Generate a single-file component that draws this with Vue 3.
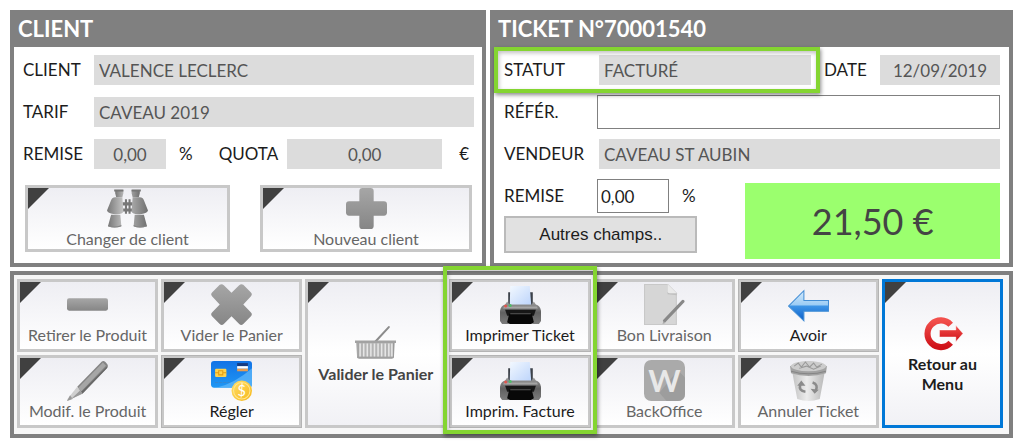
<template>
  <main class="till">
    <!-- Shared icon shapes -->
    <svg class="sprite" aria-hidden="true">
      <defs>
        <linearGradient id="grey" x1="0" y1="0" x2="0" y2="1">
          <stop offset="0" stop-color="#a6a6a6" />
          <stop offset="1" stop-color="#868686" />
        </linearGradient>
        <linearGradient id="metal" x1="0" y1="0" x2="1" y2="0">
          <stop offset="0" stop-color="#777" />
          <stop offset="0.4" stop-color="#c4c4c4" />
          <stop offset="1" stop-color="#707070" />
        </linearGradient>
        <linearGradient id="pale" x1="0" y1="0" x2="1" y2="0">
          <stop offset="0" stop-color="#c2c2c2" />
          <stop offset="0.45" stop-color="#ececec" />
          <stop offset="1" stop-color="#b8b8b8" />
        </linearGradient>
        <linearGradient id="card" x1="0" y1="0" x2="0" y2="1">
          <stop offset="0" stop-color="#1273e6" />
          <stop offset="1" stop-color="#1f97f4" />
        </linearGradient>
        <linearGradient id="coin" x1="0" y1="0" x2="1" y2="1">
          <stop offset="0" stop-color="#ffdf6b" />
          <stop offset="1" stop-color="#f7b718" />
        </linearGradient>
        <linearGradient id="sheet" x1="0" y1="0" x2="1" y2="1">
          <stop offset="0" stop-color="#f2f8ff" />
          <stop offset="1" stop-color="#bcd4fb" />
        </linearGradient>
        <linearGradient id="printer" x1="0" y1="0" x2="0" y2="1">
          <stop offset="0" stop-color="#a0a0a0" />
          <stop offset="0.5" stop-color="#606060" />
          <stop offset="1" stop-color="#7c7c7c" />
        </linearGradient>
        <linearGradient id="blue" x1="0" y1="0" x2="0" y2="1">
          <stop offset="0" stop-color="#d6ebfb" />
          <stop offset="0.46" stop-color="#9dcdf5" />
          <stop offset="0.52" stop-color="#3d94e6" />
          <stop offset="1" stop-color="#0a5cc8" />
        </linearGradient>
        <linearGradient id="red" x1="0" y1="0" x2="0" y2="1">
          <stop offset="0" stop-color="#f2504c" />
          <stop offset="1" stop-color="#cf1219" />
        </linearGradient>
      </defs>

      <symbol id="icon-binoculars" viewBox="0 0 40 40">
        <path d="M15 14h10v3H15zM15 20h10v3H15zM17.500 11h2v14h-2zM21 11h2v14h-2z" fill="#777" />
        <path d="M8 2h8v3l-1 4H9L8 5zM24 2h8v3l-1 4h-6l-1-4z" fill="url(#metal)" />
        <path d="M7 1.500h9v2H7zM24 1.500h9v2h-9z" fill="#777" />
        <path d="M8 9h7l1 14q-1 3-8 2.500Q1 25 0 22L4 12q1-3 4-3zM32 9h-7l-1 14q1 3 8 2.500 7-.5 8-3.500L36 12q-1-3-4-3z" fill="url(#metal)" />
        <path d="M4 26h9l1 11q-6 3-13 0zM27 26h9l3 11q-7 3-13 0z" fill="url(#metal)" />
        <path d="M1 36q6 3 13 0v1.500q-7 2-13 0zM26 36q6 3 13 0v1.500q-7 2-13 0z" fill="#858585" />
      </symbol>

      <symbol id="icon-plus" viewBox="0 0 40 40">
        <path d="M16 0h8q3 0 3 3v10h10q3 0 3 3v8q0 3-3 3H27v10q0 3-3 3h-8q-3 0-3-3V27H3q-3 0-3-3v-8q0-3 3-3h10V3q0-3 3-3z" fill="url(#grey)" />
      </symbol>

      <symbol id="icon-minus" viewBox="0 0 40 40">
        <rect x="0" y="14" width="40" height="12" rx="2" fill="url(#grey)" />
      </symbol>

      <symbol id="icon-cross" viewBox="0 0 40 40">
        <path d="M8.500.800q2-1.500 4 .4L20 8.500l7.500-7.300q2-1.900 4-.4l7.500 7.400q1.800 2-.2 4L31.500 20l7.300 7.500q2 2 .2 4l-7.500 7.500q-2 1.800-4 0L20 31.500 12.500 39q-2 1.800-4 0L1 31.500q-1.800-2 .2-4L8.500 20 1.200 12.200q-2-2-.2-4z" fill="url(#grey)" />
      </symbol>

      <symbol id="icon-pencil" viewBox="0 0 40 40">
        <path d="M10 26 34 1.500q1.500-1.500 3.500.5l2 2.500q1 2-.5 3.500L15 33z" fill="#858585" />
        <path d="M11 27 35 2.500l3 3L14 30.500z" fill="#a6a6a6" />
        <path d="m13.500 31.500 25-25 .8 1L15 33z" fill="#696969" />
        <path d="m10 26 5 7L1.500 39.500 0 40l.5-2z" fill="#cfcfcf" />
        <path d="M3 34.500 5.500 38 0 40zM10 26l2.500 4L4 38 15 33z" fill="#999" />
      </symbol>

      <symbol id="icon-card" viewBox="0 0 40 40">
        <rect x="0" y="1" width="40" height="26" rx="3" fill="url(#card)" />
        <path d="M40 8v16q0 3-3 3H5q18-4 35-19z" fill="#65bbfb" opacity="0.700" />
        <rect x="4" y="8.500" width="11" height="8" rx="1" fill="#ffd34d" />
        <path d="M4 12.500h3.500M11.500 12.500H15M7.500 10.500h4v4h-4z" fill="none" stroke="#e39d13" />
        <path d="M25.500 3H36v3H25.500z" fill="#163b80" />
        <path d="M25.500 6H36v2.500H25.500z" fill="#fff" />
        <path d="M25.500 8.500H36V11H25.500z" fill="#e79b4e" />
        <path d="M4 22h14" stroke="#3786ce" stroke-dasharray="3 1" />
        <circle cx="30" cy="30" r="10" fill="url(#coin)" />
        <circle cx="30" cy="30" r="8" fill="none" stroke="#ffe68f" />
      </symbol>

      <symbol id="icon-basket" viewBox="0 0 40 40">
        <path d="M20 18 33 4" stroke="#8c8c8c" stroke-width="2" stroke-linecap="round" />
        <path d="M1 18h38l-1 15q0 2-2 2H4q-2 0-2-2z" fill="#b4b4b4" />
        <path d="M5 20v13M8.500 20v13M12 20v13M15.500 20v13M19 20v13M22.500 20v13M26 20v13M29.500 20v13M33 20v13M36 20v13" stroke="#e6e6e6" stroke-width="1.500" />
        <path d="M2 33.500h36M3 19v15M37.500 19v15" stroke="#999" />
        <path d="M0 17h40v2.500H0z" fill="#a2a2a2" />
      </symbol>

      <symbol id="icon-printer" viewBox="0 0 40 40">
        <path d="M8 8h3v14H8zM29 8h3v14h-3z" fill="#3c4149" />
        <path d="M10 2h19l1.500 19h-21z" fill="url(#sheet)" />
        <path d="M7 17 9 20h22l2-3 2 3q4 1 5 6v10l-2 3h-6l-1-5H9l-1 5H2l-2-3V26q1-5 5-6z" fill="url(#printer)" />
        <path d="M4 22h32l1 2H3z" fill="#a5a5a5" />
        <path d="M5 25h30l-2 6H7z" fill="#171717" />
        <path d="M9 29h22l2 8q-1 2-3 2H10q-2 0-3-2z" fill="#080808" />
        <path d="M10 29h20" stroke="#555" />
        <circle cx="5.500" cy="21.500" r="1.500" fill="#e0564e" />
        <circle cx="10" cy="21" r="1.500" fill="#4fbc68" />
      </symbol>

      <symbol id="icon-note" viewBox="0 0 40 40">
        <path d="M0 0h23l9 9v31H0z" fill="#d6d6d6" />
        <path d="M.5.500H23L31.500 9v30.500H.5z" fill="none" stroke="#c8c8c8" />
        <path d="m23 0 9 9v2l-9-1z" fill="#c0c0c0" />
        <path d="M23 0v7q0 2 2 2h7z" fill="#eaeaea" />
        <path d="m20 36 18-19" stroke="#888" stroke-width="3" stroke-linecap="round" />
        <path d="m18 39 1-3 2 2z" fill="#aaa" />
      </symbol>

      <symbol id="icon-office" viewBox="0 0 40 40">
        <rect width="40" height="40" rx="7" fill="#aaa" />
        <path d="m15 32 18-22 7 7v16q0 7-7 7H22z" fill="#9d9d9d" />
      </symbol>

      <symbol id="icon-arrow" viewBox="0 0 40 40">
        <path d="M.5 21.500 15.500 6.500v9.500h24v10.500h-24V36z" fill="url(#blue)" stroke="#438ed5" />
      </symbol>

      <symbol id="icon-bin" viewBox="0 0 40 40">
        <path d="m4 11 5 27q11 4 22 0l5-27z" fill="url(#pale)" />
        <path d="M2 6q18-9 36 0l-1 7q-17 5-34 0z" fill="#a2a2a2" />
        <ellipse cx="20" cy="6" rx="17" ry="5" fill="#ccc" />
        <path d="m6 6 4-3 3 4 4-5 4 5 4-4 3 4 5-3M11 8l7-2 7 3 7-3" fill="none" stroke="#999" />
        <path d="M3 11q17 5 34 0" fill="none" stroke="#858585" />
        <path d="M17 31q-7-1-5-7M24 22q6 2 3 8" fill="none" stroke="#8b8b8b" stroke-width="2.500" />
        <path d="m9 25 4-5 4 5zM30 29l-4 4-4-5z" fill="#8b8b8b" />
      </symbol>

      <symbol id="icon-exit" viewBox="0 0 40 40">
        <path d="M28 11.500A13 13 0 1 0 28 29" fill="none" stroke="url(#red)" stroke-width="6" />
        <path d="M17 16.500h16v-4.500l7 8-7 8v-4.500H17z" fill="url(#red)" stroke="#fff" stroke-width="0.500" />
      </symbol>
    </svg>

    <div class="panels">
      <section class="panel">
        <h2 class="panel__title">CLIENT</h2>
        <div class="panel__body client">
          <div class="row">
            <label class="label" for="client">CLIENT</label>
            <input id="client" class="field" value="VALENCE LECLERC" readonly />
          </div>
          <div class="row">
            <label class="label" for="tarif">TARIF</label>
            <input id="tarif" class="field" value="CAVEAU 2019" readonly />
          </div>
          <div class="row">
            <label class="label" for="remise-client">REMISE</label>
            <input id="remise-client" class="field field--centered field--rate" value="0,00" readonly />
            <span class="percent">%</span>
            <label class="quota" for="quota">QUOTA</label>
            <input id="quota" class="field field--centered" value="0,00" readonly />
            <span class="euro">€</span>
          </div>
          <div class="client__actions">
            <button v-for="action in clientActions" :key="action.icon" class="tile tile--low" disabled>
              <svg class="tile__icon" viewBox="0 0 40 40"><use :href="`#icon-${action.icon}`" /></svg>
              <span class="tile__label">{{ action.label }}</span>
            </button>
          </div>
        </div>
      </section>

      <section class="panel">
        <h2 class="panel__title">TICKET N°70001540</h2>
        <div class="panel__body ticket">
          <div class="row">
            <div class="status">
              <label class="label" for="statut">STATUT</label>
              <input id="statut" class="field" value="FACTURÉ" readonly />
            </div>
            <label class="date-label" for="date">DATE</label>
            <input id="date" class="field field--centered field--date" value="12/09/2019" readonly />
          </div>
          <div class="row">
            <label class="label" for="refer">RÉFÉR.</label>
            <input id="refer" v-model="reference" class="field field--editable" />
          </div>
          <div class="row">
            <label class="label" for="vendeur">VENDEUR</label>
            <input id="vendeur" class="field" value="CAVEAU ST AUBIN" readonly />
          </div>
          <div class="ticket__bottom">
            <div class="ticket__extra">
              <div class="row">
                <label class="label" for="remise">REMISE</label>
                <input id="remise" v-model="discount" class="field field--editable field--rate" />
                <span class="percent">%</span>
              </div>
              <button class="more">Autres champs..</button>
            </div>
            <output class="total">21,50 €</output>
          </div>
        </div>
      </section>
    </div>

    <section class="actions">
      <div
        v-for="(column, index) in actionColumns"
        :key="index"
        class="actions__column"
        :class="{ 'actions__column--highlighted': column[0].icon === 'printer' }"
      >
        <button
          v-for="action in column"
          :key="action.label"
          class="tile"
          :class="{ 'tile--tall': column.length === 1, 'tile--exit': action.icon === 'exit' }"
          :disabled="action.disabled"
        >
          <svg class="tile__icon" viewBox="0 0 40 40">
            <use :href="`#icon-${action.icon}`" />
            <text v-if="action.icon === 'card'" class="coin-sign" x="30" y="35">$</text>
            <text v-if="action.icon === 'office'" class="office-sign" x="20" y="31">W</text>
          </svg>
          <span class="tile__label">{{ action.label }}</span>
        </button>
      </div>
    </section>
  </main>
</template>

<script setup>
import { ref } from 'vue'

const reference = ref('')
const discount = ref('0,00')

const clientActions = [
  { icon: 'binoculars', label: 'Changer de client' },
  { icon: 'plus', label: 'Nouveau client' }
]

// A column with a single action is drawn as one tall button
const actionColumns = [
  [
    { icon: 'minus', label: 'Retirer le Produit', disabled: true },
    { icon: 'pencil', label: 'Modif. le Produit', disabled: true }
  ],
  [
    { icon: 'cross', label: 'Vider le Panier', disabled: true },
    { icon: 'card', label: 'Régler' }
  ],
  [{ icon: 'basket', label: 'Valider le Panier', disabled: true }],
  [
    { icon: 'printer', label: 'Imprimer Ticket' },
    { icon: 'printer', label: 'Imprim. Facture' }
  ],
  [
    { icon: 'note', label: 'Bon Livraison', disabled: true },
    { icon: 'office', label: 'BackOffice', disabled: true }
  ],
  [
    { icon: 'arrow', label: 'Avoir' },
    { icon: 'bin', label: 'Annuler Ticket', disabled: true }
  ],
  [{ icon: 'exit', label: 'Retour au Menu' }]
]
</script>

<style>
body {
  margin: 0;
  background: #fff;
}
</style>

<style scoped>
.till {
  padding: 10px 11px 9px 10px;
  font-family: Lato, "Liberation Sans", sans-serif;
  font-size: 17px;
  line-height: 20px;
  color: #1c1c1c;
}

.till * {
  box-sizing: border-box;
}

.sprite {
  position: absolute;
  width: 0;
  height: 0;
}

.panels {
  display: grid;
  grid-template-columns: 476fr 523fr;
  gap: 4px;
  margin-bottom: 4px;
}

.panel {
  display: flex;
  flex-direction: column;
  min-width: 0;
  border: 4px solid #808080;
  border-top: none;
  background: #fff;
}

.panel__title {
  margin: 0;
  padding: 4px;
  background: #808080;
  color: #fff;
  font-size: 22px;
  line-height: 29px;
  font-weight: 700;
}

.panel__body {
  flex: 1;
  display: flex;
  flex-direction: column;
  gap: 12px;
}

.client {
  padding: 8px 8px 11px 9px;
}

.ticket {
  padding: 8px 9px 4px 10px;
}

.row {
  display: flex;
  align-items: center;
  height: 30px;
}

.label {
  flex: none;
  width: 71px;
}

.ticket .label {
  width: 95px;
}

.field {
  flex: 1;
  min-width: 0;
  height: 30px;
  padding: 0 5px;
  border: none;
  border-radius: 0;
  background: #dcdcdc;
  color: #555;
  font: inherit;
}

.field--centered {
  text-align: center;
}

.field--rate {
  flex: none;
  width: 72px;
}

.field--date {
  flex: none;
  width: 120px;
}

.field--editable {
  height: 34px;
  margin-left: -2px;
  padding: 0 3px;
  border: 1px solid #808080;
  background: #fff;
  color: #1c1c1c;
}

.percent {
  margin-left: 13px;
}

.quota {
  margin: 0 9px 0 26px;
}

.euro {
  margin: 0 5px 0 17px;
}

.client__actions {
  display: grid;
  grid-template-columns: 205fr 212fr;
  gap: 30px;
  margin-top: 4px;
  padding: 0 2px;
}

.status {
  position: relative;
  flex: 1;
  display: flex;
  align-items: center;
  min-width: 0;
  margin-right: 13px;
}

.status::after,
.actions__column--highlighted::after {
  content: "";
  position: absolute;
  z-index: 1;
  border: 4px solid #84d531;
  box-shadow: 1px 2px 4px rgba(0, 0, 0, 0.45), inset 1px 2px 4px rgba(0, 0, 0, 0.25);
  pointer-events: none;
}

.status::after {
  inset: -8px -9px -8px -10px;
}

.date-label {
  width: 56px;
}

.ticket__bottom {
  display: flex;
  align-items: flex-end;
  gap: 48px;
}

.ticket__extra {
  flex: 193;
  display: flex;
  flex-direction: column;
  gap: 5px;
  padding-bottom: 6px;
}

.more {
  height: 37px;
  border: 2px solid #bababa;
  background: #e1e1e1;
  color: #1c1c1c;
  font-family: "Liberation Sans", sans-serif;
  font-size: 17px;
}

.total {
  flex: 254;
  display: flex;
  align-items: center;
  justify-content: center;
  height: 76px;
  background: #9bff6e;
  color: #444;
  font-size: 36px;
}

.actions {
  display: grid;
  grid-template-columns: repeat(6, minmax(0, 141fr)) minmax(0, 121fr);
  gap: 3px;
  padding: 4px 6px 6px 3px;
  border: 4px solid #808080;
  background: #f7f7f7;
}

.actions__column {
  position: relative;
  display: flex;
  flex-direction: column;
  gap: 3px;
}

.actions__column--highlighted::after {
  inset: -13px -6px -6px;
}

.tile {
  position: relative;
  display: flex;
  flex-direction: column;
  align-items: center;
  justify-content: center;
  min-width: 0;
  height: 73px;
  padding: 0 0 3px;
  border: 3px solid #c8c8c8;
  outline: 1px solid #b4b4b4;
  outline-offset: -1px;
  background: linear-gradient(#eeeef3, #fff);
  color: #1c1c1c;
  font-family: inherit;
  font-size: 16px;
  line-height: 20px;
}

.tile::before {
  content: "";
  position: absolute;
  top: 0;
  left: 0;
  border-top: 21px solid #404040;
  border-right: 21px solid transparent;
}

.tile:disabled {
  outline-color: #c8c8c8;
  color: #666;
}

.tile__icon {
  flex: none;
  width: 41px;
  height: 41px;
}

.tile--low {
  height: 67px;
  padding: 0;
}

.tile--tall {
  flex: 1;
  height: auto;
  padding: 0;
  background: linear-gradient(#eeeef3, #fff 50%, #f1f1f5);
  font-weight: 700;
}

.tile--tall:disabled {
  color: #444;
}

.tile--exit {
  border-color: #0078d7;
  outline: none;
}

.tile--exit .tile__label {
  width: 90px;
}

.coin-sign,
.office-sign {
  text-anchor: middle;
}

.coin-sign {
  fill: #fff;
  font-size: 14px;
}

.office-sign {
  fill: #e8e8e8;
  font-size: 30px;
  font-weight: 700;
}
</style>
